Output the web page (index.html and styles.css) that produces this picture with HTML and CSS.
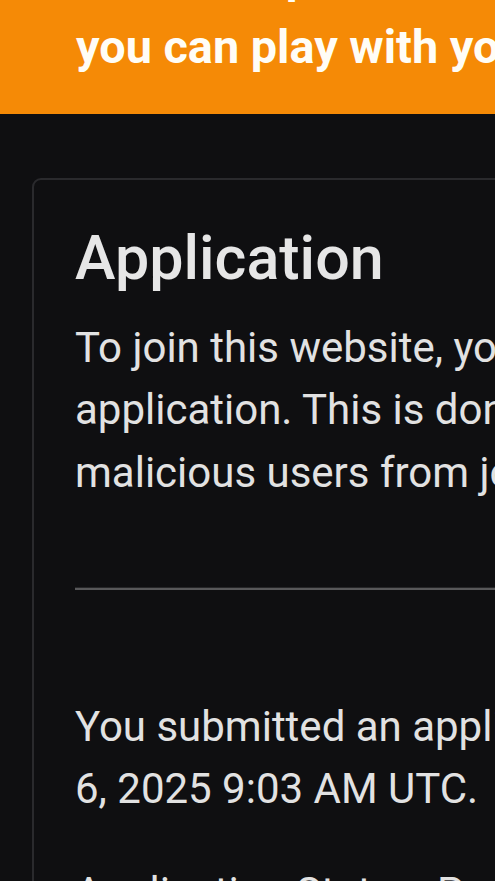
FILE: index.html
```html
<!DOCTYPE html>
<html lang="en">
<head>
<meta charset="utf-8">
<title>Application</title>
<link rel="stylesheet" href="styles.css">
</head>
<body>
  <header class="banner">
    <p class="banner-text">Then complete this form so that<br>you can play with your friends!</p>
  </header>
  <main class="page">
    <section class="card">
      <h2 class="card-title">Application</h2>
      <p class="card-text">To join this website, you need to fill out this<br>application. This is done to keep the<br>malicious users from joining the server.</p>
      <hr class="divider">
      <p class="card-text">You submitted an application on February<br>6, 2025 9:03 AM UTC.</p>
      <p class="card-text">Application Status: Pending</p>
    </section>
  </main>
</body>
</html>
```
FILE: styles.css
```css
html, body {
  margin: 0;
  padding: 0;
  overflow: hidden;
  background: #0f0f11;
}
body {
  width: 1100px;
  font-family: Roboto, "Liberation Sans", sans-serif;
  color: #e2e2e2;
}
.banner {
  background: #f58a06;
  margin-top: -100px;
  padding: 41.6px 0 32px 76px;
}
.banner-text {
  margin: 0;
  font-size: 46.8px;
  line-height: 70.2px;
  font-weight: 700;
  color: #fffdf6;
  white-space: nowrap;
}
.page {
  padding: 64px 0 0 32px;
}
.card {
  width: 950px;
  border: 2px solid #2a2a2d;
  border-radius: 9px;
  background: #0f0f11;
  padding: 41px 41px;
}
.card-title {
  margin: 0 0 20.8px;
  font-size: 61px;
  line-height: 74.9px;
  font-weight: 500;
  color: #e6e6e6;
}
.card-text {
  margin: 0 0 41.6px;
  font-size: 42px;
  line-height: 62.4px;
  white-space: nowrap;
}
.divider {
  margin: 82.6px 0 106px;
  height: 0;
  border: 0;
  border-top: 1px solid #262628;
  border-bottom: 2px solid #58585a;
}
```
